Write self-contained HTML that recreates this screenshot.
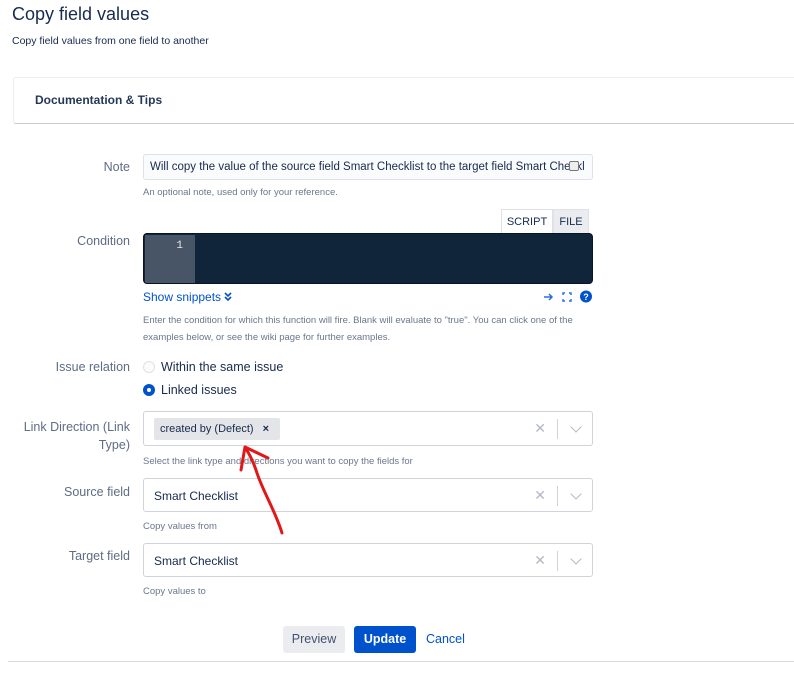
<!DOCTYPE html>
<html><head><meta charset="utf-8"><style>
*{box-sizing:border-box;margin:0;padding:0}
body{width:794px;height:685px;background:#fff;font-family:"Liberation Sans",sans-serif;color:#172b4d;position:relative;overflow:hidden}
.a{position:absolute;white-space:nowrap}
.lbl{position:absolute;right:664px;font-size:12.5px;color:#5e6c84;text-align:right}
.help{position:absolute;left:143px;font-size:9.5px;color:#6b778c}
.sel{position:absolute;left:143px;width:450px;border:1px solid #d0d4da;border-radius:3px;background:#fff}
.x{position:absolute;right:46px;font-size:14px;color:#b3b9c4}
.sep{position:absolute;right:34px;width:1px;background:#d0d4da}
.chev{position:absolute;right:12px;width:8px;height:8px;border-right:1.5px solid #b3b9c4;border-bottom:1.5px solid #b3b9c4;transform:rotate(45deg)}
</style></head><body>
<div class="a" style="left:12px;top:4px;font-size:18px;color:#172b4d">Copy field values</div>
<div class="a" style="left:12px;top:35px;font-size:10.5px;color:#172b4d">Copy field values from one field to another</div>
<div class="a" style="left:13px;top:77px;width:800px;height:47px;border:1px solid #ebecf0;border-bottom:1px solid #c8ccd4;border-radius:3px"></div>
<div class="a" style="left:35px;top:93px;font-size:12px;font-weight:bold;color:#253858">Documentation &amp; Tips</div>

<div class="lbl" style="top:160px">Note</div>
<div class="a" style="left:143px;top:154px;width:450px;height:26px;border:1px solid #dfe1e6;border-radius:3px;background:#fafbfc;font-size:11.5px;padding:6px 0 0 6px;overflow:hidden;color:#172b4d">Will copy the value of the source field Smart Checklist to the target field Smart Checkl</div>
<div class="a" style="left:569px;top:161px;width:10px;height:10px;border:1px solid #777;border-radius:2px;background:#eee"></div>
<div class="help" style="top:187px">An optional note, used only for your reference.</div>

<div class="a" style="left:501px;top:209px;width:52px;height:25px;border:1px solid #dfe1e6;border-bottom:none;background:#fff;font-size:11px;text-align:center;padding-top:6px;color:#172b4d">SCRIPT</div>
<div class="a" style="left:553px;top:209px;width:36px;height:25px;border:1px solid #dfe1e6;border-bottom:none;background:#ebecf0;font-size:11px;text-align:center;padding-top:6px;color:#172b4d">FILE</div>
<div class="lbl" style="top:234px">Condition</div>
<div class="a" style="left:143px;top:233px;width:450px;height:51px;background:#10243a;border-radius:4px;border:1px solid #091525;overflow:hidden">
<div style="position:absolute;left:1px;top:1px;width:50px;height:48px;background:#475566;color:#e6e6e6;font-family:'Liberation Mono',monospace;font-size:11px;text-align:right;padding:5px 12px 0 0">1</div></div>
<div class="a" style="left:143px;top:290px;font-size:12px;color:#0052cc">Show snippets</div>
<svg class="a" style="left:223px;top:292px" width="10" height="10" viewBox="0 0 10 10"><path d="M2 1l3 3 3-3M2 5l3 3 3-3" stroke="#0052cc" stroke-width="1.6" fill="none"/></svg>
<svg class="a" style="left:542px;top:290px" width="56" height="14" viewBox="0 0 56 14">
<path d="M2 7h8M7 4l3 3-3 3" stroke="#2d6fd6" stroke-width="1.5" fill="none"/>
<path d="M21 5V3h2M27 3h2v2M29 9v2h-2M23 11h-2V9" stroke="#2d6fd6" stroke-width="1.4" fill="none"/>
<circle cx="44" cy="6.5" r="6" fill="#0052cc"/><text x="44" y="10" font-size="9" font-weight="bold" fill="#fff" text-anchor="middle" font-family="Liberation Sans">?</text></svg>
<div class="help" style="top:315px">Enter the condition for which this function will fire. Blank will evaluate to "true". You can click one of the</div>
<div class="help" style="top:332px">examples below, or see the wiki page for further examples.</div>

<div class="lbl" style="top:360px">Issue relation</div>
<div class="a" style="left:143px;top:361px;width:12px;height:12px;border:1px solid #dfe1e6;border-radius:50%;background:#fafbfc"></div>
<div class="a" style="left:161px;top:360px;font-size:12.5px">Within the same issue</div>
<div class="a" style="left:143px;top:384px;width:12px;height:12px;border-radius:50%;background:#0052cc"><div style="position:absolute;left:4px;top:4px;width:4px;height:4px;border-radius:50%;background:#fff"></div></div>
<div class="a" style="left:161px;top:383px;font-size:12.5px">Linked issues</div>

<div class="lbl" style="top:418px;line-height:18px">Link Direction (Link<br>Type)</div>
<div class="sel" style="top:411px;height:35px"><div class="a" style="left:10px;top:6px;width:126px;height:22px;background:#e4e5e8;border-radius:2px;font-size:11px;padding:5px 0 0 6px">created by (Defect) <b style="margin-left:6px">×</b></div><div class="x" style="top:8px">✕</div><div class="sep" style="top:7px;height:20px"></div><div class="chev" style="top:11px"></div></div>
<div class="help" style="top:456px">Select the link type and directions you want to copy the fields for</div>

<div class="lbl" style="top:485px">Source field</div>
<div class="sel" style="top:478px;height:34px"><div class="a" style="left:10px;top:10px;font-size:12px">Smart Checklist</div><div class="x" style="top:8px">✕</div><div class="sep" style="top:7px;height:20px"></div><div class="chev" style="top:11px"></div></div>
<div class="help" style="top:521px">Copy values from</div>

<div class="lbl" style="top:549px">Target field</div>
<div class="sel" style="top:543px;height:34px"><div class="a" style="left:10px;top:10px;font-size:12px">Smart Checklist</div><div class="x" style="top:8px">✕</div><div class="sep" style="top:7px;height:20px"></div><div class="chev" style="top:11px"></div></div>
<div class="help" style="top:586px">Copy values to</div>

<div class="a" style="left:283px;top:626px;width:62px;height:27px;background:#ebecf0;border-radius:3px;font-size:12.5px;color:#42526e;text-align:center;padding-top:6px">Preview</div>
<div class="a" style="left:354px;top:626px;width:62px;height:27px;background:#0052cc;border-radius:3px;font-size:12.5px;font-weight:bold;color:#fff;text-align:center;padding-top:6px">Update</div>
<div class="a" style="left:426px;top:632px;font-size:12.5px;color:#0052cc">Cancel</div>
<div class="a" style="left:8px;top:661px;width:786px;height:1px;background:#dcdcdc"></div>

<svg class="a" style="left:0;top:0" width="794" height="685"><path d="M282 533C275 510 262 490 256 470C252 458 248 452 245 447M241 470L245 447L268 458" stroke="#e01818" stroke-width="3" fill="none" stroke-linecap="round" stroke-linejoin="round"/></svg>
</body></html>
